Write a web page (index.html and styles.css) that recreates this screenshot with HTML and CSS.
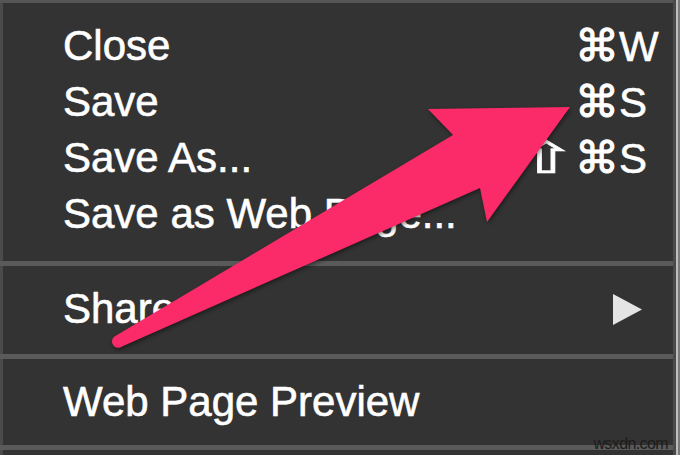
FILE: index.html
```html
<!DOCTYPE html>
<html>
<head>
<meta charset="utf-8">
<link rel="stylesheet" href="styles.css">
</head>
<body>
<div class="page">
  <div class="menu">
    <div class="group first">
      <div class="item"><span class="label">Close</span><span class="keys"><span class="mods">⌘</span><span class="key">W</span></span></div>
      <div class="item"><span class="label">Save</span><span class="keys"><span class="mods">⌘</span><span class="key">S</span></span></div>
      <div class="item"><span class="label">Save As...</span><span class="keys"><span class="shift">⇧</span><span class="mods">⌘</span><span class="key">S</span></span></div>
      <div class="item"><span class="label">Save as Web Page...</span></div>
    </div>
    <div class="sep sep1"></div>
    <div class="group">
      <div class="item"><span class="label">Share</span>
        <svg class="submenu" width="29" height="31" viewBox="0 0 29 31"><polygon points="0,0 29,15.5 0,31" fill="#e4e4e4"/></svg>
      </div>
    </div>
    <div class="sep sep2"></div>
    <div class="group">
      <div class="item"><span class="label">Web Page Preview</span></div>
    </div>
    <div class="sep sep3"></div>
    <span class="watermark">wsxdn.com</span>
  </div>
  <div class="edge"></div>
  <svg class="arrow" width="680" height="455" viewBox="0 0 680 455">
    <path d="M428,109 L570,107 L487,222 L480,188 L122,346.5 A5.8,5.8 0 0 1 114.5,336.5 L453,135 Z" fill="#fb2a68"/>
  </svg>
</div>
</body>
</html>
```
FILE: styles.css
```css
html, body {
  margin: 0;
  padding: 0;
  background: #333333;
}
.page {
  position: relative;
  width: 680px;
  height: 455px;
  overflow: hidden;
  display: flex;
}
.menu {
  position: relative;
  width: 673px;
  height: 455px;
  box-sizing: border-box;
  border-top: 3px solid #565656;
  background: linear-gradient(to right, #4b4b4b 0, #4b4b4b 3px, #333333 3px);
  display: flex;
  flex-direction: column;
  font-family: "Liberation Sans", Arial, sans-serif;
  color: #ffffff;
}
.edge {
  width: 7px;
  height: 455px;
  background: linear-gradient(to right, #4a4a4a 0, #4a4a4a 3px, #bdbdbd 3px, #bdbdbd 5px, #7a7a7a 5px);
}
.group.first {
  padding-top: 15px;
}
.item {
  height: 56px;
  line-height: 56px;
  font-size: 42px;
  display: flex;
  align-items: center;
  padding-left: 63px;
  padding-right: 13px;
  white-space: nowrap;
  -webkit-text-stroke: 0.6px #ffffff;
}
.label {
  flex: 1;
}
.keys {
  display: flex;
  align-items: baseline;
  line-height: 56px;
}
.mods {
  font-family: "DejaVu Sans", sans-serif;
  font-size: 44px;
  line-height: 56px;
  -webkit-text-stroke: 1px #ffffff;
}
.shift {
  display: inline-block;
  font-family: "DejaVu Sans", sans-serif;
  font-size: 44px;
  line-height: 56px;
  transform: scaleX(1.7);
  transform-origin: right center;
  margin-right: -3px;
  -webkit-text-stroke: 0.6px #ffffff;
}
.key {
  width: 41px;
  padding-left: 0;
}
.submenu {
  margin-right: 18px;
}
.sep {
  height: 5px;
  background: #5a5a5a;
}
.sep1 { margin-top: 19px; margin-bottom: 15px; }
.sep2 { margin-top: 17px; margin-bottom: 15px; }
.sep3 { margin-top: 15px; }
.watermark {
  position: absolute;
  right: 5px;
  bottom: 2px;
  font-family: "Liberation Sans", Arial, sans-serif;
  font-size: 16px;
  letter-spacing: -0.6px;
  color: #1c1c1c;
}
.arrow {
  position: absolute;
  left: 0;
  top: 0;
  filter: drop-shadow(1px 2px 2px rgba(0, 0, 0, 0.45));
}
```
